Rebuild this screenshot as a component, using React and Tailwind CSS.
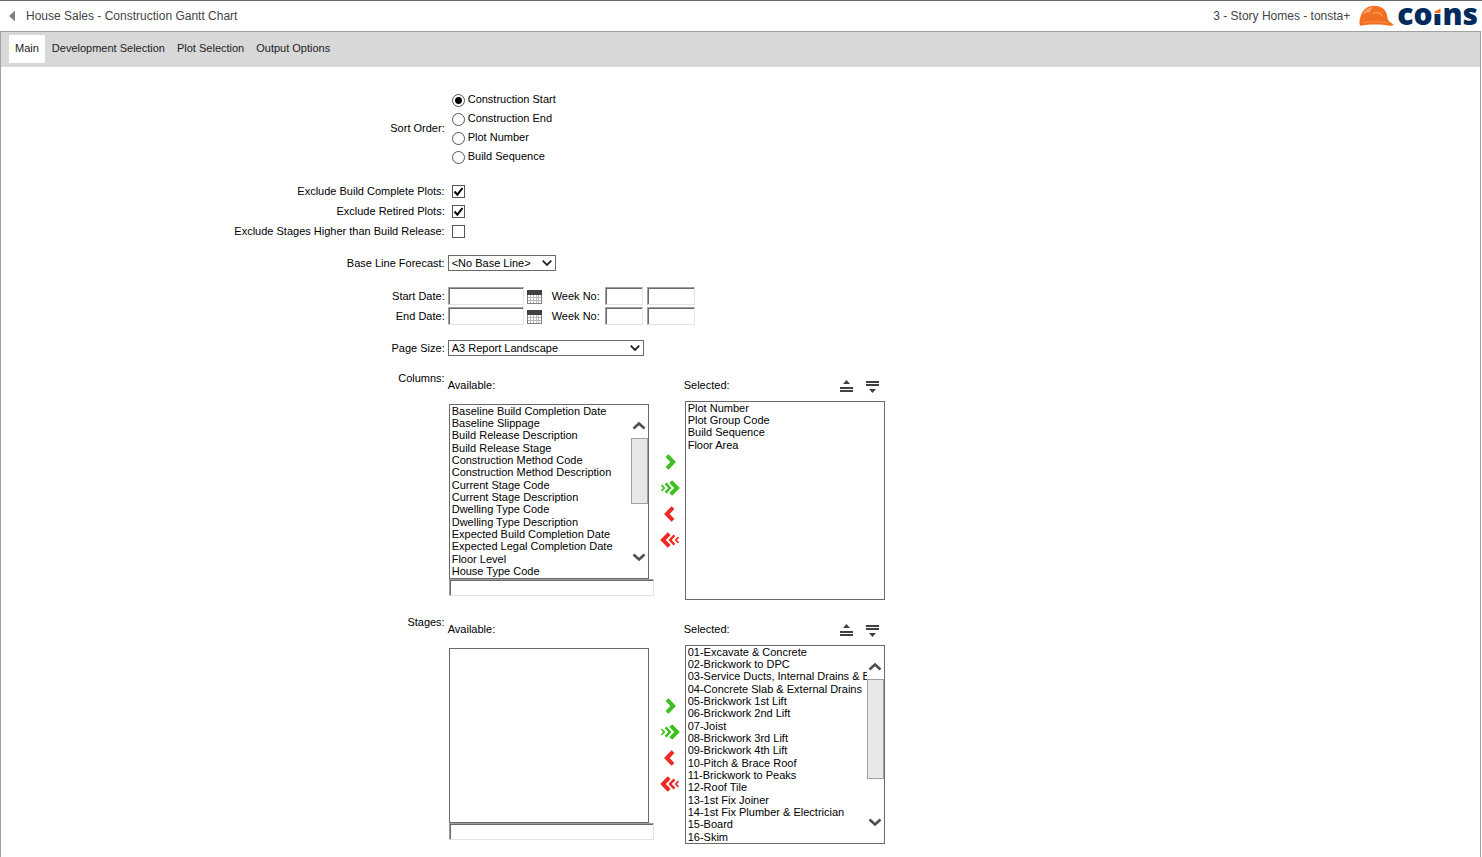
import React from 'react';

const availableColumns = [
  'Baseline Build Completion Date',
  'Baseline Slippage',
  'Build Release Description',
  'Build Release Stage',
  'Construction Method Code',
  'Construction Method Description',
  'Current Stage Code',
  'Current Stage Description',
  'Dwelling Type Code',
  'Dwelling Type Description',
  'Expected Build Completion Date',
  'Expected Legal Completion Date',
  'Floor Level',
  'House Type Code',
];

const selectedColumns = ['Plot Number', 'Plot Group Code', 'Build Sequence', 'Floor Area'];

const selectedStages = [
  '01-Excavate & Concrete',
  '02-Brickwork to DPC',
  '03-Service Ducts, Internal Drains & Ba',
  '04-Concrete Slab & External Drains',
  '05-Brickwork 1st Lift',
  '06-Brickwork 2nd Lift',
  '07-Joist',
  '08-Brickwork 3rd Lift',
  '09-Brickwork 4th Lift',
  '10-Pitch & Brace Roof',
  '11-Brickwork to Peaks',
  '12-Roof Tile',
  '13-1st Fix Joiner',
  '14-1st Fix Plumber & Electrician',
  '15-Board',
  '16-Skim',
];

const tabs = ['Main', 'Development Selection', 'Plot Selection', 'Output Options'];
const sortOrders = ['Construction Start', 'Construction End', 'Plot Number', 'Build Sequence'];

const insetField =
  'block rounded-none border border-t-[#a0a0a0] border-l-[#a0a0a0] border-r-[#e3e3e3] border-b-[#e3e3e3] bg-white px-1 shadow-[inset_1px_1px_0_#696969] outline-none';

function Logo() {
  return (
    <div className="flex items-center gap-[3px]" role="img" aria-label="coins">
      <svg width="35" height="22" viewBox="0 0 35 22" aria-hidden="true">
        <path
          d="M1 20.800C0 17.500.4 14 1.400 12.500C2.500 5.500 8 .8 15.500.8c6.500 0 11.500 3.700 12.500 9.200.4 2.200.6 4 1.400 5.200 1 1.700 3.200 2.600 5.200 4.600-.9.700-2.200 1-4 1C22 19 10 19 1 20.800z"
          fill="#f37021"
        />
        <path d="M3.500 10C5.500 5 10 2 15.500 2.200c-3.500 1.300-5 3.400-4 5.300C8.500 6.800 5.500 7.800 3.500 10z" fill="#f9a368" />
        <path d="M14 8.500c3.500-1.600 7.500-.8 9.500 2.700" fill="none" stroke="#f9a368" strokeWidth="1.200" />
        <path d="M4 17.800c8-1.600 17-1.500 25 .2" fill="none" stroke="#f8935a" strokeWidth=".8" />
      </svg>
      <span className="flex h-[30px] items-center pb-1 font-['Open_Sans',sans-serif] text-[30px] leading-none font-extrabold text-[#002b5c]">
        co
        <span className="relative">
          ı
          <svg className="absolute top-2 left-px" width="8" height="7" viewBox="0 0 8 7" aria-hidden="true">
            <path d="M0 0h8v7H0z" fill="#fff" />
            <path d="M.5 6V4.500L6.500 1.500V6z" fill="#f37021" />
          </svg>
        </span>
        ns
      </span>
    </div>
  );
}

function Chevron({ up = false }) {
  return (
    <svg width="14" height="10" viewBox="0 0 14 10" aria-hidden="true">
      <path d={up ? 'M1.500 7.500L7 2.500l5.500 5' : 'M1.500 2.500L7 7.500l5.500-5'} fill="none" stroke="#505050" strokeWidth="2.600" />
    </svg>
  );
}

function Row({ label, htmlFor, className = '', children }) {
  return (
    <div className={'flex ' + className}>
      <label htmlFor={htmlFor} className="w-[30%] shrink-0 text-right leading-5">
        {label}
      </label>
      <div className="flex items-center pl-[3px]">{children}</div>
    </div>
  );
}

function Dropdown({ id, value, className }) {
  return (
    <div className={'relative ' + className}>
      <select id={id} className="block h-4 w-full appearance-none rounded-none border border-[#696969] bg-white pl-[3px] leading-[14px] outline-none">
        <option>{value}</option>
      </select>
      <svg className="pointer-events-none absolute top-1 right-1" width="10" height="8" viewBox="0 0 10 8" aria-hidden="true">
        <path d="M.7 1.700L5 6l4.300-4.300" fill="none" stroke="#222" strokeWidth="1.800" />
      </svg>
    </div>
  );
}

function CheckRow({ id, label, checked }) {
  return (
    <Row label={label} htmlFor={id}>
      <div className="relative ml-1">
        <input id={id} type="checkbox" defaultChecked={checked} className="peer block size-[13px] appearance-none border border-[#555] bg-white" />
        <svg className="pointer-events-none absolute inset-0 hidden peer-checked:block" width="13" height="13" viewBox="0 0 13 13" aria-hidden="true">
          <path d="M2.500 6.500l2.900 3.100L10.500 3" fill="none" stroke="#000" strokeWidth="2" />
        </svg>
      </div>
    </Row>
  );
}

function CalendarIcon() {
  return (
    <svg width="15" height="14" viewBox="0 0 15 14" aria-hidden="true" shapeRendering="crispEdges">
      <path d="M0 0h15v14H0z" fill="#b8b8b8" />
      <path d="M0 0h15v5H0z" fill="#404040" />
      <path
        d="M1 5h2v2H1zM4 5h2v2H4zM7 5h2v2H7zM10 5h1v2h-1zM12 5h2v2h-2zM1 8h2v2H1zM4 8h2v2H4zM7 8h2v2H7zM10 8h1v2h-1zM12 8h2v2h-2zM1 11h2v2H1zM4 11h2v2H4zM7 11h2v2H7zM10 11h1v2h-1zM12 11h2v2h-2z"
        fill="#fff"
      />
      <path d="M0 5h1v9H0zM14 5h1v9h-1zM0 13h15v1H0z" fill="#808080" />
    </svg>
  );
}

function DateRow({ id, label }) {
  return (
    <Row label={label} htmlFor={id}>
      <input id={id} type="text" className={insetField + ' h-[18px] w-[76px]'} />
      <button type="button" aria-label={'Pick ' + label} className="ml-[3px] pt-px">
        <CalendarIcon />
      </button>
      <label htmlFor={id + '-week'} className="ml-[10px] w-[53px] leading-5">
        Week No:
      </label>
      <input id={id + '-week'} type="text" className={insetField + ' h-[18px] w-[38px]'} />
      <input type="text" aria-label={label + ' year'} className={insetField + ' ml-1 h-[18px] w-12'} />
    </Row>
  );
}

function ScrollRail({ thumb }) {
  return (
    <div aria-hidden="true" className="pointer-events-none absolute top-[17px] right-px bottom-[17px] flex w-[17px] flex-col items-center bg-white">
      <Chevron up />
      <div className={'mt-[7px] w-full border border-[#a0a0a0] bg-[#e8e8e8] ' + thumb} />
      <div className="flex-1" />
      <Chevron />
    </div>
  );
}

function ListBox({ label, items, className, rail }) {
  return (
    <div className="relative w-[200px]">
      <select
        multiple
        aria-label={label}
        className={'block w-full overflow-hidden rounded-none border border-[#696969] bg-white p-0 outline-none ' + className}
      >
        {items.map((item) => (
          <option key={item} className="min-h-0 p-0 pl-0.5 leading-3 nth-[3n]:pb-px">
            {item}
          </option>
        ))}
      </select>
      {rail}
    </div>
  );
}

const moves = [
  { name: 'Add', color: '#3fbf1f', flip: false, all: false },
  { name: 'Add all', color: '#3fbf1f', flip: false, all: true },
  { name: 'Remove', color: '#ee2a24', flip: true, all: false },
  { name: 'Remove all', color: '#ee2a24', flip: true, all: true },
];

function MoveIcon({ color, flip, all }) {
  return (
    <svg width="20" height="16" viewBox="0 0 20 16" aria-hidden="true">
      <g fill="none" stroke={color} transform={flip ? 'matrix(-1 0 0 1 20 0)' : undefined}>
        {all ? (
          <>
            <path d="M1.500 5.200L4.200 8l-2.700 2.800" strokeWidth="1.700" />
            <path d="M5.600 3.300L9.900 8l-4.300 4.700" strokeWidth="2.500" />
            <path d="M10.800 1.700L17 8l-6.200 6.300" strokeWidth="4" />
          </>
        ) : (
          <path d="M7 1.700L13.200 8 7 14.300" strokeWidth="4" />
        )}
      </g>
    </svg>
  );
}

function OrderIcon({ down = false }) {
  return (
    <svg width="13" height="12" viewBox="0 0 13 12" aria-hidden="true" fill="#404040">
      {down ? <path d="M0 0h13v2H0zM0 3h13v2H0zM3 8h7l-3.500 4z" /> : <path d="M0 10h13v2H0zM0 7h13v2H0zM3 4h7L6.500 0z" />}
    </svg>
  );
}

function Picker({ label, available, selected, availableRail, selectedRail }) {
  return (
    <div className="flex">
      <div className="w-[30%] shrink-0 text-right leading-5">{label}</div>
      <div className="flex pl-[3px]">
        <div className="w-[207px] pt-[7px]">
          <div className="leading-5">Available:</div>
          <div className="pt-[9px] pl-px">
            <ListBox label={label + ' available'} items={available} className="h-[175px]" rail={availableRail} />
            <input type="text" aria-label={label + ' filter'} className={insetField + ' h-[17px] w-[205px]'} />
          </div>
        </div>
        <div className="flex w-[29px] flex-col items-center gap-[10px] pt-[86px] pl-0.5">
          {moves.map((m) => (
            <button key={m.name} type="button" aria-label={m.name} className="block">
              <MoveIcon {...m} />
            </button>
          ))}
        </div>
        <div className="w-[201px] pt-[7px]">
          <div className="flex items-center leading-5">
            <span className="flex-1">Selected:</span>
            <button type="button" aria-label="Move up" className="mt-0.5">
              <OrderIcon />
            </button>
            <button type="button" aria-label="Move down" className="mt-1 mr-1.5 ml-[13px]">
              <OrderIcon down />
            </button>
          </div>
          <div className="pt-[6px] pl-px">
            <ListBox label={label + ' selected'} items={selected} className="h-[199px]" rail={selectedRail} />
          </div>
        </div>
      </div>
    </div>
  );
}

export default function App() {
  return (
    <div className="flex min-h-screen flex-col border-t border-[#696969] bg-white font-['Liberation_Sans',Arial,sans-serif] text-[11px] text-black">
      <header className="flex h-[30px] items-center pr-1 pl-2 text-xs text-[#444]">
        <button type="button" aria-label="Back">
          <svg width="8" height="12" viewBox="0 0 8 12" aria-hidden="true">
            <path d="M7 .5v11L1 6z" fill="#808080" />
          </svg>
        </button>
        <h1 className="ml-[10px] flex-1">House Sales - Construction Gantt Chart</h1>
        <span className="mr-[9px]">3 - Story Homes - tonsta+</span>
        <Logo />
      </header>

      <main className="mr-px flex-1 border border-b-0 border-[#a0a0a0]">
        <nav className="flex h-[35px] items-start bg-[#d8d8d8] pt-[3px] pl-2">
          {tabs.map((tab, i) => (
            <a
              key={tab}
              href="#"
              className={'flex h-7 items-center px-[6px] pb-0.5 text-[#222] ' + (i === 0 ? 'mr-px bg-white' : '')}
            >
              {tab}
            </a>
          ))}
        </nav>

        <form className="pt-[23px]">
          <fieldset className="flex items-center">
            <div className="w-[30%] text-right">Sort Order:</div>
            <div className="pl-[7px]">
              {sortOrders.map((name, i) => (
                <label key={name} className="flex h-[19px] items-center gap-[3px]">
                  <input
                    type="radio"
                    name="sort"
                    defaultChecked={i === 0}
                    className="mt-0.5 size-[13px] appearance-none rounded-full border border-[#555] bg-white checked:bg-[radial-gradient(circle,#000_3px,#fff_4px)]"
                  />
                  {name}
                </label>
              ))}
            </div>
          </fieldset>

          <div className="mt-[15px]">
            <CheckRow id="complete" label="Exclude Build Complete Plots:" checked />
            <CheckRow id="retired" label="Exclude Retired Plots:" checked />
            <CheckRow id="higher" label="Exclude Stages Higher than Build Release:" checked={false} />
          </div>

          <Row label="Base Line Forecast:" htmlFor="baseline" className="mt-3">
            <Dropdown id="baseline" value="<No Base Line>" className="w-[108px]" />
          </Row>

          <div className="mt-[13px]">
            <DateRow id="start" label="Start Date:" />
            <DateRow id="end" label="End Date:" />
          </div>

          <Row label="Page Size:" htmlFor="page-size" className="mt-3">
            <Dropdown id="page-size" value="A3 Report Landscape" className="w-[196px]" />
          </Row>

          <div className="mt-[10px] flex flex-col gap-3">
            <Picker
              label="Columns:"
              available={availableColumns}
              selected={selectedColumns}
              availableRail={<ScrollRail thumb="h-[66px]" />}
            />
            <Picker
              label="Stages:"
              available={[]}
              selected={selectedStages}
              selectedRail={<ScrollRail thumb="h-[100px]" />}
            />
          </div>
        </form>
      </main>
    </div>
  );
}
